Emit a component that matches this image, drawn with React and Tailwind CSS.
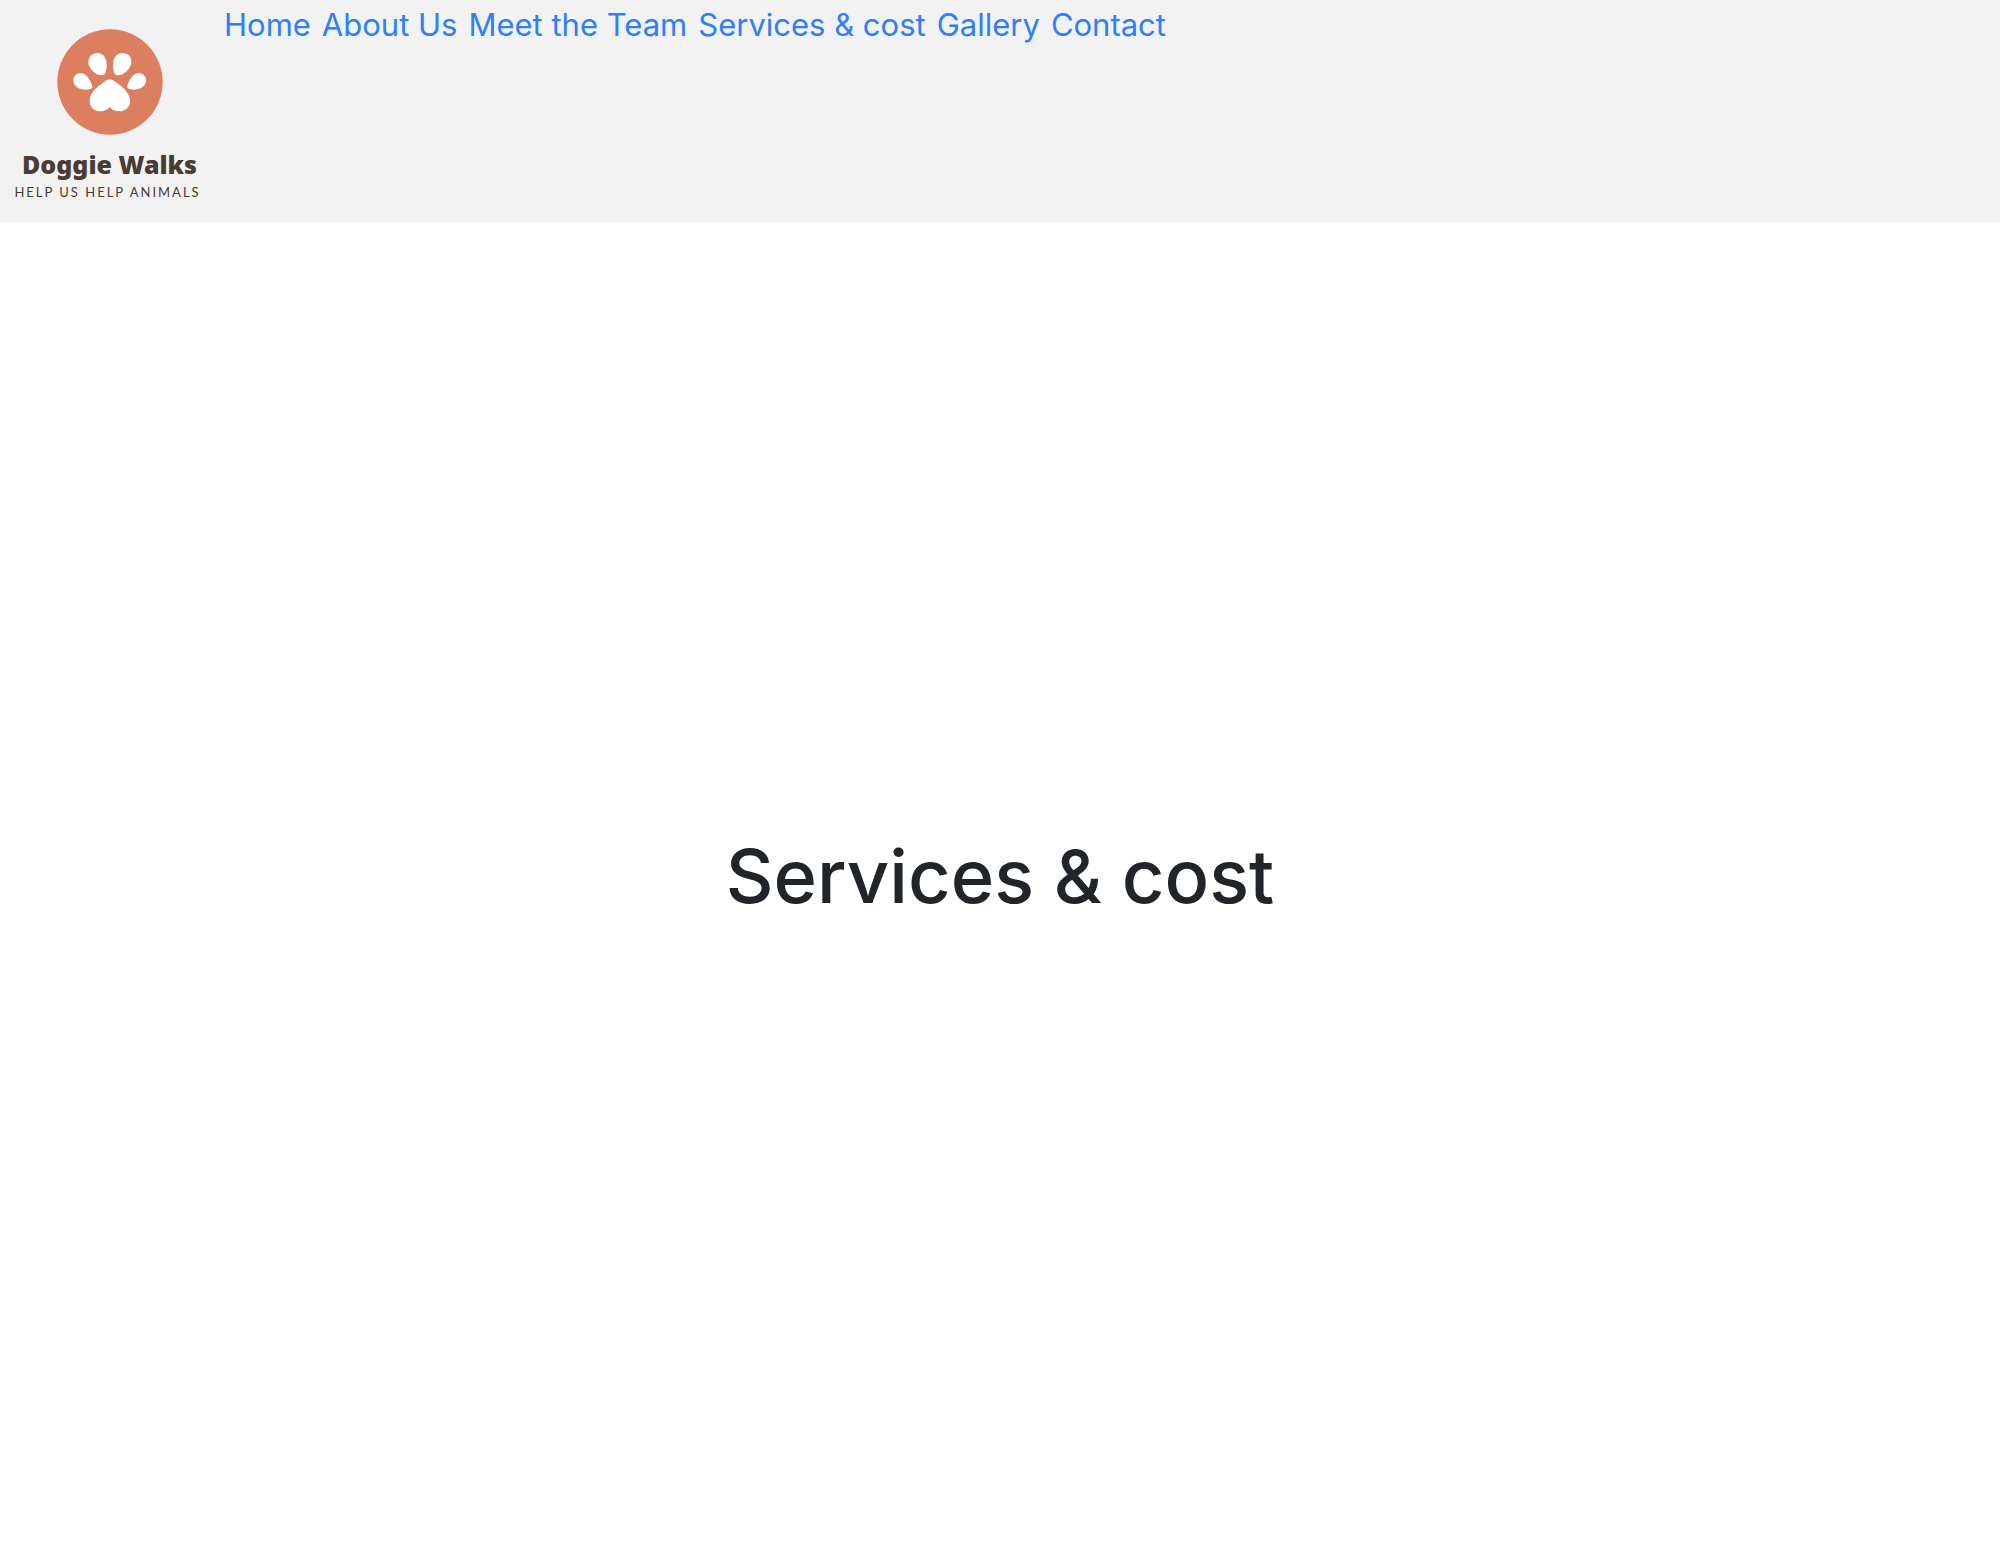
const links = ["Home", "About Us", "Meet the Team", "Services & cost", "Gallery", "Contact"];

function Paw() {
  return (
    <svg viewBox="0 0 318 318" className="h-[106px] w-[106px]" aria-hidden="true">
      <circle cx="159" cy="159" r="158" fill="#dc7f61" />
      <g fill="#fff">
        <path d="M158 151C166 151 174 158 181 163C201 177 219 195 219 216C219 234 205 247 187 247C174 247 166 243 158 235C150 243 142 247 130 247C112 247 98 234 98 216C98 195 116 177 136 163C143 158 150 151 158 151Z" />
        <path d="M121 72C105 72 94 84 94 99C94 118 115 139 134 139C146 139 149 124 149 108C149 87 139 72 121 72Z" />
        <path d="M196 72C212 72 223 84 223 98C223 118 201 139 182 139C171 139 168 124 168 108C168 87 178 72 196 72Z" />
        <path d="M72 132C58 132 49 142 49 154C49 172 66 182 85 182C97 182 106 180 106 175C106 165 91 132 72 132Z" />
        <path d="M244 132C258 132 267 142 267 154C267 172 249 182 230 182C219 182 211 179 211 174C211 163 226 132 244 132Z" />
      </g>
    </svg>
  );
}

function Logo() {
  return (
    <div className="flex w-[219px] shrink-0 flex-col items-center pt-[29px] whitespace-nowrap text-[#493c33]">
      <Paw />
      <div className="mt-[13px] font-['Noto_Sans',sans-serif] text-[25px] leading-8 font-black">
        Doggie Walks
      </div>
      <div className="mt-1 pr-1 font-['Lato',sans-serif] text-[13px] leading-4 tracking-[2px]">
        HELP US HELP ANIMALS
      </div>
    </div>
  );
}

export default function App() {
  return (
    <div className="flex min-h-screen flex-col bg-white font-['Inter',sans-serif]">
      <header className="flex min-h-[222px] bg-[#f2f2f2]">
        <Logo />
        <nav className="flex flex-wrap content-start gap-x-[11px] pl-[5px] text-[31px] leading-[50px] text-[#2f7efb]">
          {links.map((label) => (
            <a key={label} href="#">
              {label}
            </a>
          ))}
        </nav>
      </header>
      <main className="flex flex-1 items-center justify-center pb-3">
        <h1 className="text-[74px] leading-[96px] font-medium text-[#212529]">Services &amp; cost</h1>
      </main>
    </div>
  );
}
